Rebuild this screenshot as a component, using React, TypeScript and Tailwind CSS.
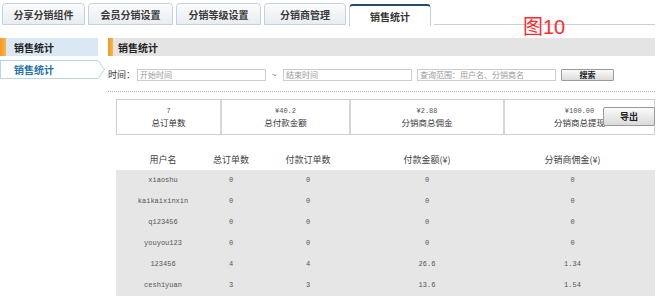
import React from "react";

const TABS = ["分享分销组件", "会员分销设置", "分销等级设置", "分销商管理", "销售统计"];
const TAB_W = ["w-[83px]", "w-[85px]", "w-[85px]", "w-[82px]", "w-[82px]"];

const SUMMARY = [
  { value: "7", label: "总订单数", w: "w-[103px]" },
  { value: "¥40.2", label: "总付款金额", w: "w-[129px]" },
  { value: "¥2.88", label: "分销商总佣金", w: "w-[154px]" },
  { value: "¥100.00", label: "分销商总提现", w: "flex-1" },
];

const COLS = ["w-[94px]", "w-[42px]", "w-[112px]", "w-[126px]", "flex-1"];
const HEAD = ["用户名", "总订单数", "付款订单数", "付款金额(¥)", "分销商佣金(¥)"];

const ROWS = [
  ["xiaoshu", "0", "0", "0", "0"],
  ["kaikaixinxin", "0", "0", "0", "0"],
  ["q123456", "0", "0", "0", "0"],
  ["youyou123", "0", "0", "0", "0"],
  ["123456", "4", "4", "26.6", "1.34"],
  ["ceshiyuan", "3", "3", "13.6", "1.54"],
];

const CN = "font-['Noto_Sans_CJK_SC',sans-serif]";
const MONO = "font-['Liberation_Mono','Noto_Sans_CJK_SC',monospace]";

export default function App() {
  return (
    <div className={`w-[660px] h-[298px] relative overflow-hidden bg-white text-[#333] ${CN}`}>
      {/* Tabs */}
      <div className="flex items-end pt-[3px] pl-[2px] h-[25px]">
        {TABS.map((t, i) => {
          const active = i === 4;
          return (
            <div
              key={t}
              className={`${TAB_W[i]} h-[22px] mr-[3px] rounded-t-[4px] flex items-center justify-center text-[10px] font-bold whitespace-nowrap ${
                active
                  ? "bg-white border-x border-[#c3d2de] border-t-2 border-t-[#2c4a66] h-[22px] -mb-px relative"
                  : "border border-[#c3d2de] bg-gradient-to-b from-[#fbfcfd] to-[#e8edf1] text-[#3a3a3a]"
              }`}
            >
              {t}
            </div>
          );
        })}
        <div className="flex-1 border-b border-[#c3d2de] mr-[5px]" />
      </div>

      {/* annotation */}
      <div className="absolute left-[523px] top-[17px] text-[20px] leading-none text-[#ff2a2a] font-['Liberation_Sans','Noto_Sans_CJK_SC',sans-serif]">
        图10
      </div>

      <div className="flex mt-[13px]">
        {/* Sidebar */}
        <div className="w-[105px] shrink-0">
          <div className="w-[98px] h-[18px] flex items-center bg-[#d9e8f2]">
            <div className="w-[6px] h-full bg-gradient-to-r from-[#f59a1c] to-[#f7b44d]" />
            <span className="pl-[8px] text-[10px] font-bold text-[#222]">销售统计</span>
          </div>
          <div className="flex h-[19px] mt-[4px]">
            <div className="w-[97px] h-full border-y border-l border-[#b7d5e8] bg-white flex items-center pl-[13px] text-[10px] font-bold text-[#1d72a8]">
              销售统计
            </div>
            <svg width="8" height="19" viewBox="0 0 8 19" className="shrink-0">
              <polygon points="0,0.5 1,0.5 7.5,9.5 1,18.5 0,18.5" fill="#fff" stroke="#b7d5e8" />
              <rect x="0" y="1" width="1" height="17" fill="#fff" />
            </svg>
          </div>
        </div>

        {/* Main */}
        <div className="ml-[3px] w-[547px]">
          <div className="h-[18px] flex items-center bg-[#e4e4e4]">
            <div className="w-[5px] h-full bg-gradient-to-r from-[#f59a1c] to-[#f7b44d]" />
            <span className="pl-[5px] text-[10px] font-bold text-[#222]">销售统计</span>
          </div>

          {/* Search */}
          <div className="flex items-center h-[13px] mt-[12px] text-[9px]">
            <span className="w-[29px] whitespace-nowrap">时间：</span>
            <div className="w-[129px] h-[12px] border border-[#cdcdcd] flex items-center pl-[2px] text-[8px] text-[#999]">开始时间</div>
            <span className="w-[17px] pl-[6px] text-[8px] text-[#666]">~</span>
            <div className="w-[129px] h-[12px] border border-[#cdcdcd] flex items-center pl-[2px] text-[8px] text-[#999]">结束时间</div>
            <div className="ml-[5px] w-[139px] h-[12px] border border-[#cdcdcd] flex items-center pl-[2px] text-[8px] text-[#999]">查询范围：用户名、分销商名</div>
            <div className="ml-[5px] w-[53px] h-[12px] border border-[#9a9a9a] rounded-[1px] bg-gradient-to-b from-[#fafafa] to-[#dcdcdc] flex items-center justify-center text-[8px] font-bold text-[#222]">
              搜索
            </div>
          </div>

          <div className="mt-[10px] border-t border-dotted border-[#b5b5b5]" />

          {/* Summary */}
          <div className="ml-[8px] mt-[7px] relative">
            <div className="flex h-[36px] border border-[#cfcfcf]">
              {SUMMARY.map((s, i) => (
                <div
                  key={s.label}
                  className={`${s.w} flex flex-col items-center justify-center ${i > 0 ? "border-l-2 border-[#d6d6d6]" : ""}`}
                >
                  <span className={`${MONO} text-[7px] leading-[10px] text-[#555]`}>{s.value}</span>
                  <span className="text-[8.5px] leading-[12px]">{s.label}</span>
                </div>
              ))}
            </div>
            <div className="absolute right-0 top-[8px] w-[52px] h-[19px] border border-[#9a9a9a] rounded-[2px] bg-gradient-to-b from-[#fbfbfb] to-[#dadada] flex items-center justify-center text-[9px] font-bold text-[#222]">
              导出
            </div>
          </div>

          {/* Table */}
          <div className="ml-[8px] mt-[14px]">
            <div className="flex h-[21px] items-center text-[9px] text-[#444]">
              {HEAD.map((h, i) => (
                <div key={h} className={`${COLS[i]} text-center whitespace-nowrap`}>{h}</div>
              ))}
            </div>
            <div className="bg-[#e6e6e6]">
              {ROWS.map((r) => (
                <div key={r[0]} className={`flex h-[21px] items-center text-[7px] text-[#555] ${MONO}`}>
                  {r.map((c, i) => (
                    <div key={i} className={`${COLS[i]} text-center whitespace-nowrap`}>{c}</div>
                  ))}
                </div>
              ))}
            </div>
          </div>
        </div>
      </div>
    </div>
  );
}
